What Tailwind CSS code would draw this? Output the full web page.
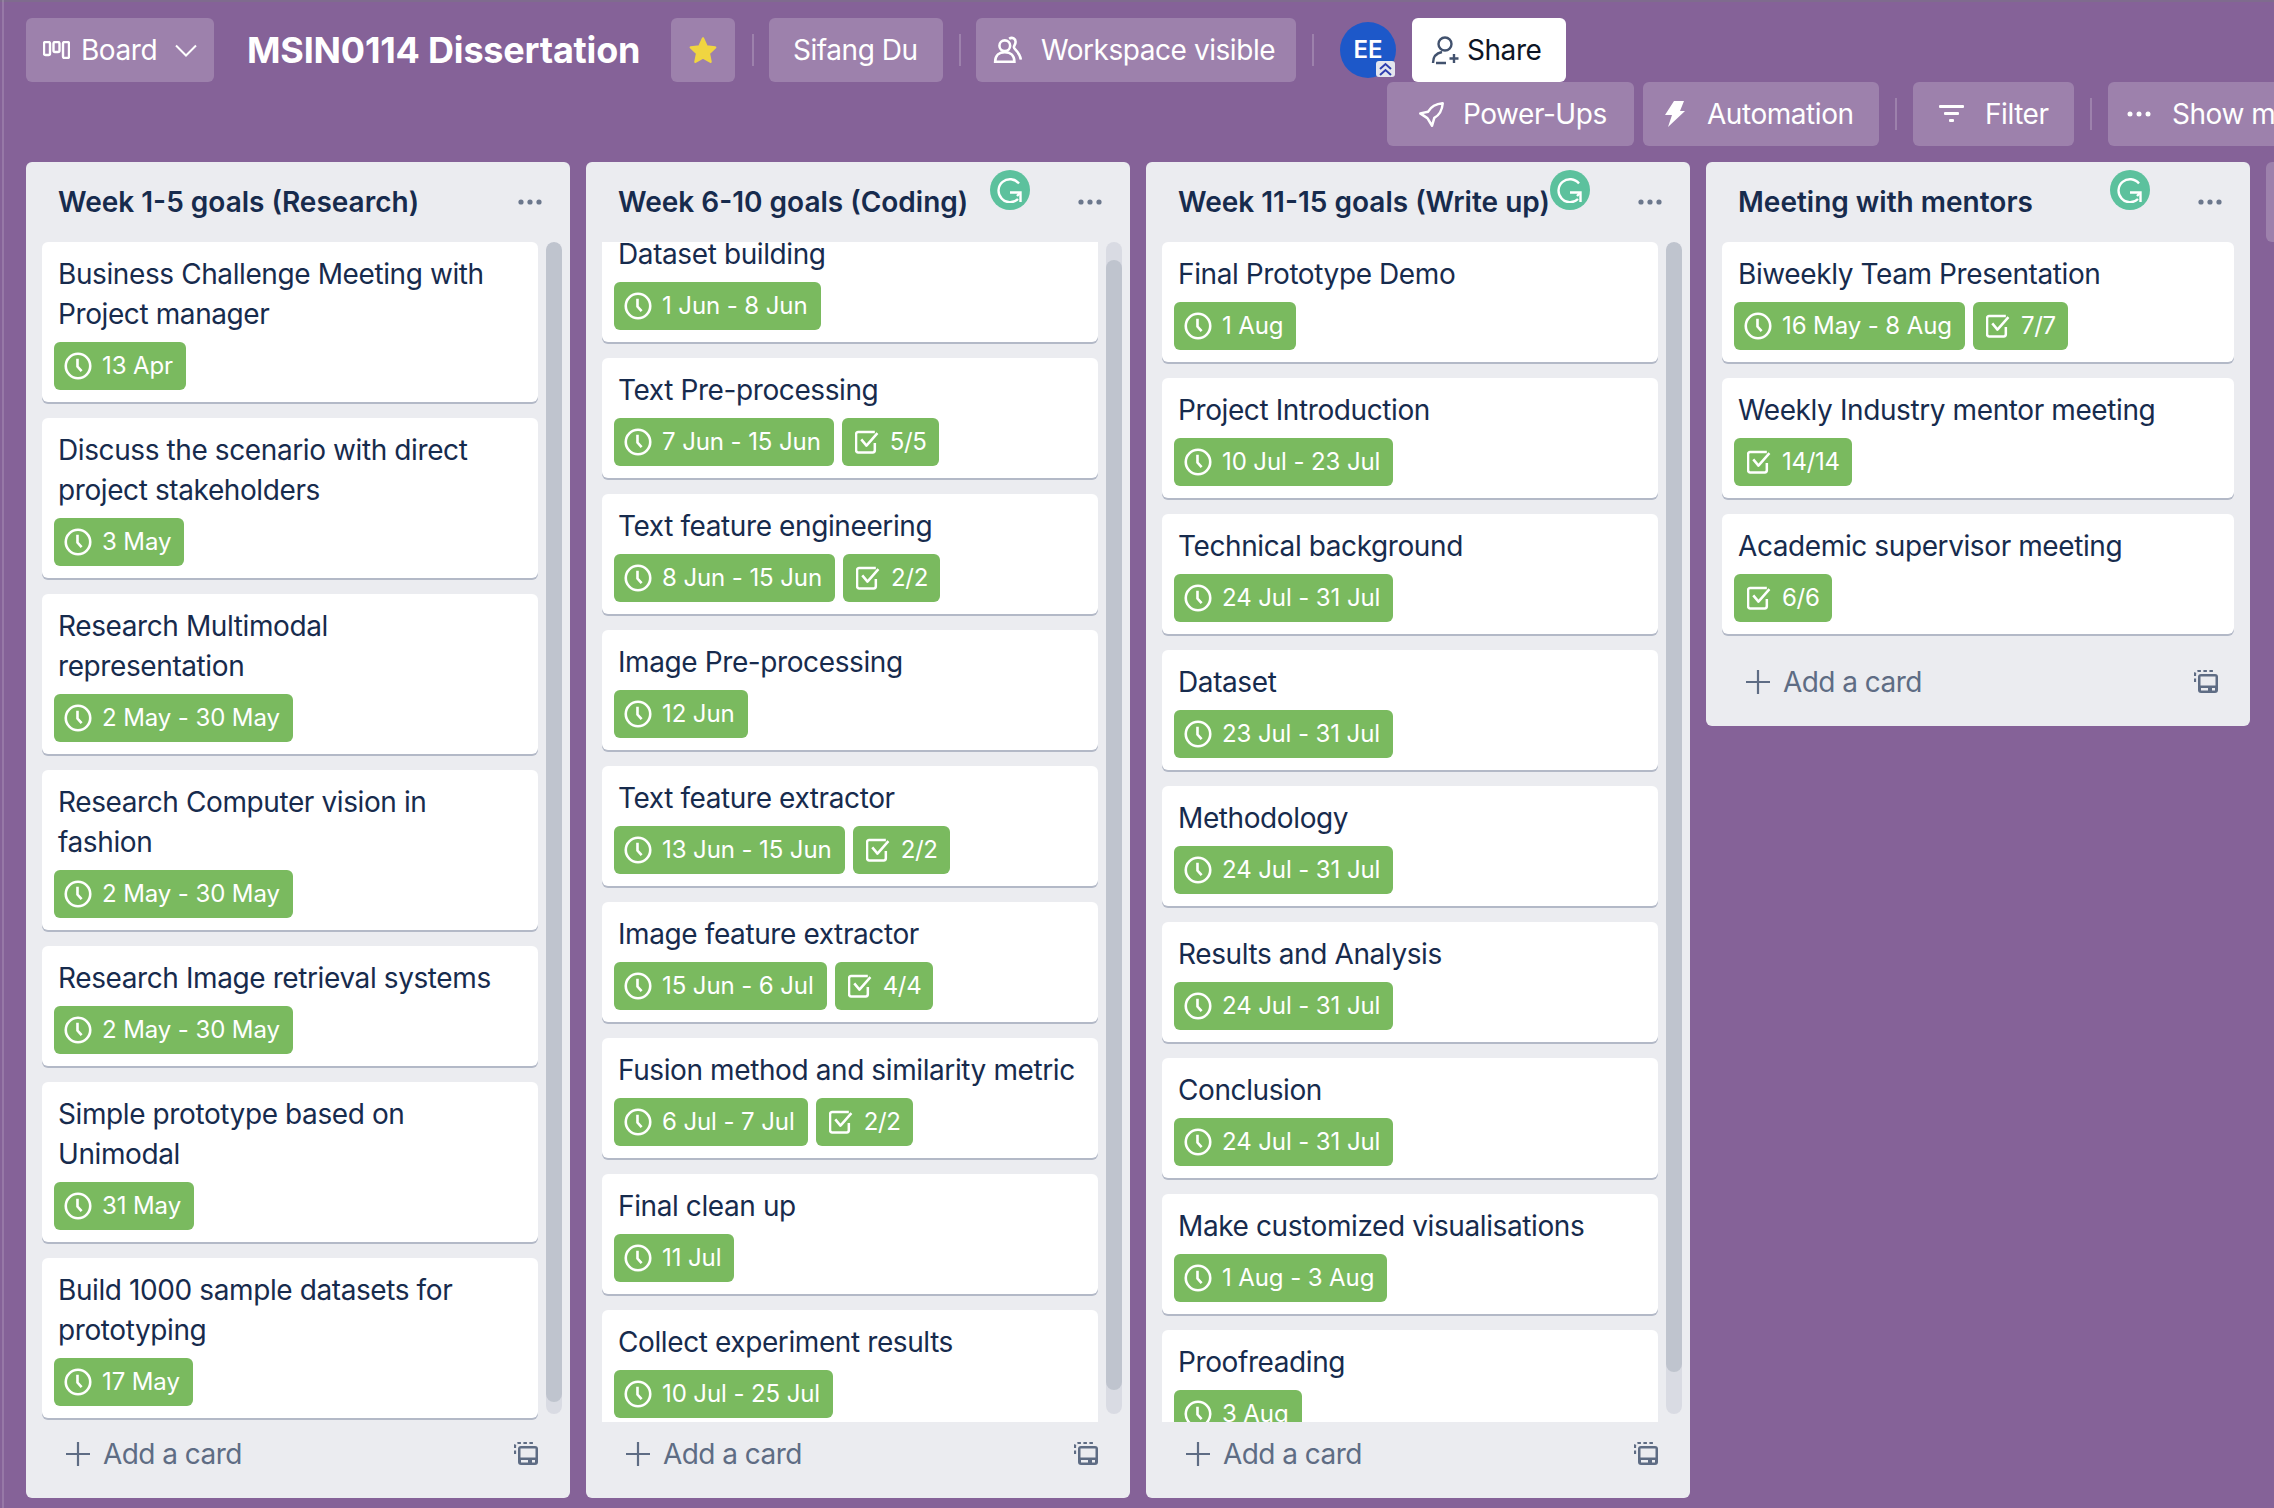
<!DOCTYPE html>
<html lang="en">
<head>
    <meta charset="UTF-8">
    <title>MSIN0114 Dissertation | Trello</title>
    <script src="https://cdn.jsdelivr.net/npm/@tailwindcss/browser@4"></script>
</head>
<body class="relative w-[2274px] h-[1508px] overflow-hidden bg-[#856298] font-['Inter','Liberation_Sans',sans-serif] text-[28px] antialiased">
    <div class="absolute left-[2px] top-0 h-full w-[2px] bg-white/15"></div>

    <header class="h-[146px] border-t-2 border-[#7f6b8e] text-white tracking-[-0.45px]">
        <!-- first row -->
        <div class="flex h-[80px] items-end pl-[26px]">
            <button class="flex h-[64px] w-[188px] shrink-0 items-center rounded-md bg-white/20 pl-[17px]">
                <svg class="w-[27px] h-[18px]" viewBox="0 0 27 18" fill="none" stroke="white" stroke-width="2.400"><rect x="1" y="1" width="6" height="13" rx="1.500"/><rect x="10.500" y="1" width="6" height="10" rx="1.500"/><rect x="20" y="1" width="6" height="16" rx="1.500"/></svg>
                <span class="ml-[11px]">Board</span>
                <svg class="ml-[18px] w-[22px] h-[13px]" viewBox="0 0 22 13" fill="none" stroke="white" stroke-width="2"><path d="M1 1.500l10 10 10-10"/></svg>
            </button>
            <h1 class="ml-[33px] flex h-[64px] w-[391px] shrink-0 items-center whitespace-nowrap text-[36px] font-bold tracking-[-0.2px]">MSIN0114 Dissertation</h1>
            <button class="ml-[33px] flex h-[64px] w-[64px] shrink-0 items-center justify-center rounded-md bg-white/20">
                <svg class="w-[30px] h-[28px]" viewBox="0 0 24 23" fill="#f0d541" stroke="#f0d541" stroke-width="2" stroke-linejoin="round"><path d="M12 2l3 6.600 7 .8-5.200 4.800 1.400 7L12 17.600 5.800 21.200l1.400-7L2 9.400l7-.8z"/></svg>
            </button>
            <div class="ml-[17px] mb-[16px] h-[32px] w-[2px] shrink-0 bg-white/20"></div>
            <button class="ml-[15px] flex h-[64px] w-[174px] shrink-0 items-center rounded-md bg-white/20 pl-[24px]">Sifang Du</button>
            <div class="ml-[16px] mb-[16px] h-[32px] w-[2px] shrink-0 bg-white/20"></div>
            <button class="ml-[15px] flex h-[64px] w-[320px] shrink-0 items-center rounded-md bg-white/20 pl-[17px]">
                <svg class="w-[30px] h-[30px]" viewBox="0 0 28 28" fill="none" stroke="white" stroke-width="2.400"><circle cx="11" cy="10" r="5"/><path d="M2 25c0-6 4-9 9-9s9 3 9 9z"/><path d="M15 3.500c3-2 6.500 0 6 3.500-.2 2-1.500 3-1.500 4.500 0 2 5.500 4 6.500 11.500"/></svg>
                <span class="ml-[18px] whitespace-nowrap">Workspace visible</span>
            </button>
            <div class="ml-[16px] mb-[16px] h-[32px] w-[2px] shrink-0 bg-white/20"></div>
            <div class="relative ml-[26px] mb-[4px] flex h-[56px] w-[56px] shrink-0 items-center justify-center rounded-full bg-[#1d58c9] text-[24px] font-semibold tracking-normal">
                EE
                <span class="absolute left-[36px] top-[39px] flex h-[16px] w-[19px] items-center justify-center rounded-[3px] bg-[#e4e6ee]">
                    <svg class="w-[13px] h-[14px]" viewBox="0 0 13 14" fill="none" stroke="#2f3fb0" stroke-width="2"><path d="M1 7l5.500-5 5.500 5M1 13l5.500-5 5.500 5"/></svg>
                </span>
            </div>
            <button class="ml-[16px] flex h-[64px] w-[154px] shrink-0 items-center rounded-md bg-white pl-[19px] text-[#0d1525]">
                <svg class="w-[30px] h-[30px]" viewBox="0 0 30 30" fill="none" stroke="#42526e" stroke-width="2.400"><circle cx="14" cy="9" r="6.500"/><path d="M2 28c0-7 4-10 9-11M5 28h10M23 19v9M18.500 23.500h9"/></svg>
                <span class="ml-[6px]">Share</span>
            </button>
        </div>
        <!-- second row -->
        <div class="flex h-[64px] items-center pl-[1387px]">
            <button class="flex h-[64px] w-[247px] shrink-0 items-center rounded-md bg-white/20 pl-[31px]">
                <svg class="w-[27px] h-[27px]" viewBox="0 0 24 24" fill="none" stroke="white" stroke-width="2.200" stroke-linejoin="round"><path d="M22 2c-6 .5-10.500 3-13 7.500L2 11l6 4 .5.500 4 6.500 2-7C19 12.500 21.500 8 22 2z"/></svg>
                <span class="ml-[18px]">Power-Ups</span>
            </button>
            <button class="ml-[9px] flex h-[64px] w-[236px] shrink-0 items-center rounded-md bg-white/20 pl-[22px]">
                <svg class="w-[20px] h-[26px]" viewBox="0 0 20 26" fill="white"><path d="M9 0h10l-4 10h5L3 26l4-12H0z"/></svg>
                <span class="ml-[22px]">Automation</span>
            </button>
            <div class="ml-[16px] h-[32px] w-[2px] shrink-0 bg-white/20"></div>
            <button class="ml-[16px] flex h-[64px] w-[161px] shrink-0 items-center rounded-md bg-white/20 pl-[26px]">
                <svg class="w-[25px] h-[18px]" viewBox="0 0 25 18" fill="white"><rect width="25" height="3" rx="1"/><rect x="5" y="7" width="15" height="3" rx="1"/><rect x="10" y="14" width="5" height="3" rx="1"/></svg>
                <span class="ml-[21px]">Filter</span>
            </button>
            <div class="ml-[16px] h-[32px] w-[2px] shrink-0 bg-white/20"></div>
            <button class="ml-[16px] flex h-[64px] w-[230px] shrink-0 items-center rounded-md bg-white/20 pl-[19px]">
                <svg class="w-[24px] h-[6px]" viewBox="0 0 24 6" fill="white"><circle cx="3" cy="3" r="2.500"/><circle cx="12" cy="3" r="2.500"/><circle cx="21" cy="3" r="2.500"/></svg>
                <span class="ml-[21px] whitespace-nowrap">Show menu</span>
            </button>
        </div>
    </header>

    <main id="board" class="mt-[16px] flex items-start gap-4 pl-[26px]"></main>

    <script>
        const clockIcon = `<svg class="w-[28px] h-[28px] shrink-0" viewBox="0 0 27 27" fill="none" stroke="white" stroke-width="2.500"><circle cx="13.500" cy="13.500" r="11.800"/><path d="M13 6.500v7.500l4 4.500"/></svg>`;
        const checkIcon = `<svg class="w-[24px] h-[24px] shrink-0" viewBox="0 0 23 23" fill="none" stroke="white" stroke-width="2.400" stroke-linejoin="round"><path d="M19 12.500v7a2 2 0 0 1-2 2H3a2 2 0 0 1-2-2V4a2 2 0 0 1 2-2h16"/><path d="M6 9l5 6L21.500 3"/></svg>`;
        const plusIcon = `<svg class="w-[24px] h-[24px] shrink-0" viewBox="0 0 24 24" stroke="#5e6c84" stroke-width="2.200"><path d="M12 0v24M0 12h24"/></svg>`;
        const templateIcon = `<svg class="mb-[2px] w-[24px] h-[23px]" viewBox="0 0 24 23" fill="none"><path d="M1 12V4a3 3 0 0 1 3-3h15" stroke="#5e6c84" stroke-width="2.200" stroke-dasharray="3.500 2.500"/><rect x="4" y="4" width="20" height="19" rx="3" fill="#5e6c84"/><rect x="6.500" y="6.500" width="15" height="9" fill="#ebecf0"/><rect x="7" y="18" width="7" height="2.500" fill="#ebecf0"/><rect x="18" y="18" width="3" height="2.500" fill="#ebecf0"/></svg>`;
        const grammarlyIcon = `<svg class="w-[26px] h-[26px]" viewBox="0 0 26 26" fill="none" stroke="white" stroke-width="2.400"><path d="M22 6.500A11.500 11.500 0 1 0 21 22"/><path d="M13 15.500h10.500V25"/><path d="M23 16l-3 3"/></svg>`;

        const boardLists = [
            {
                title: 'Week 1-5 goals (Research)', track: 1172, thumbTop: 0, thumb: 1160, scroll: 0, grammarly: false,
                cards: [
                    ['Business Challenge Meeting with Project manager', '13 Apr'],
                    ['Discuss the scenario with direct project stakeholders', '3 May'],
                    ['Research Multimodal representation', '2 May - 30 May'],
                    ['Research Computer vision in fashion', '2 May - 30 May'],
                    ['Research Image retrieval systems', '2 May - 30 May'],
                    ['Simple prototype based on Unimodal', '31 May'],
                    ['Build 1000 sample datasets for prototyping', '17 May'],
                ],
            },
            {
                title: 'Week 6-10 goals (Coding)', track: 1172, thumbTop: 18, thumb: 1130, scroll: 20, grammarly: true,
                cards: [
                    ['Dataset building', '1 Jun - 8 Jun'],
                    ['Text Pre-processing', '7 Jun - 15 Jun', '5/5'],
                    ['Text feature engineering', '8 Jun - 15 Jun', '2/2'],
                    ['Image Pre-processing', '12 Jun'],
                    ['Text feature extractor', '13 Jun - 15 Jun', '2/2'],
                    ['Image feature extractor', '15 Jun - 6 Jul', '4/4'],
                    ['Fusion method and similarity metric', '6 Jul - 7 Jul', '2/2'],
                    ['Final clean up', '11 Jul'],
                    ['Collect experiment results', '10 Jul - 25 Jul'],
                ],
            },
            {
                title: 'Week 11-15 goals (Write up)', track: 1172, thumbTop: 0, thumb: 1130, scroll: 0, grammarly: true,
                cards: [
                    ['Final Prototype Demo', '1 Aug'],
                    ['Project Introduction', '10 Jul - 23 Jul'],
                    ['Technical background', '24 Jul - 31 Jul'],
                    ['Dataset', '23 Jul - 31 Jul'],
                    ['Methodology', '24 Jul - 31 Jul'],
                    ['Results and Analysis', '24 Jul - 31 Jul'],
                    ['Conclusion', '24 Jul - 31 Jul'],
                    ['Make customized visualisations', '1 Aug - 3 Aug'],
                    ['Proofreading', '3 Aug'],
                ],
            },
            {
                title: 'Meeting with mentors', grammarly: true,
                cards: [
                    ['Biweekly Team Presentation', '16 May - 8 Aug', '7/7'],
                    ['Weekly Industry mentor meeting', null, '14/14'],
                    ['Academic supervisor meeting', null, '6/6'],
                ],
            },
        ];

        function createBadges(date, checklist) {
            let html = '';
            if (date) {
                html += `<span class="flex h-[48px] items-center gap-[10px] rounded-md bg-[#7aba5f] pl-[10px] pr-[13px] text-[24px] tracking-[-0.1px] text-white whitespace-nowrap">${clockIcon}${date}</span>`;
            }
            if (checklist) {
                html += `<span class="flex h-[48px] items-center gap-[11px] rounded-md bg-[#7aba5f] pl-[13px] pr-[12px] text-[24px] tracking-[-0.3px] text-white whitespace-nowrap">${checkIcon}${checklist}</span>`;
            }
            return html;
        }

        function createCard([text, date, checklist]) {
            return `
                <article class="mb-[16px] rounded-md bg-white pt-[12px] pb-[12px] shadow-[0_2px_0_#b3b9c7]">
                    <p class="pl-[16px] pr-[19px] leading-[40px] tracking-[-0.4px] text-[#172b4d]">${text}</p>
                    <div class="mt-[8px] flex gap-[8px] pl-[12px]">${createBadges(date, checklist)}</div>
                </article>`;
        }

        function createList(list) {
            const cards = list.cards.map(createCard).join('');
            const body = list.track
                ? `<div class="flex h-[1180px] gap-[8px] pl-[16px] pr-[8px]">
                        <div class="h-full w-[496px] overflow-hidden"><div style="margin-top:-${list.scroll}px">${cards}</div></div>
                        <div class="w-[16px] overflow-hidden rounded-lg bg-[#d9dbe3]" style="height:${list.track}px">
                            <div class="rounded-lg bg-[#bfc4ce]" style="margin-top:${list.thumbTop}px;height:${list.thumb}px"></div>
                        </div>
                    </div>`
                : `<div class="px-[16px]">${cards}</div>`;

            return `
                <section class="relative w-[544px] shrink-0 rounded-md bg-[#ebecf0] pb-[12px]">
                    <div class="flex h-[80px] items-center justify-between pl-[32px] pr-[28px]">
                        <h2 class="font-semibold whitespace-nowrap text-[#172b4d]">${list.title}</h2>
                        <svg class="w-[24px] h-[6px]" viewBox="0 0 24 6" fill="#6b778c"><circle cx="3" cy="3" r="2.600"/><circle cx="12" cy="3" r="2.600"/><circle cx="21" cy="3" r="2.600"/></svg>
                    </div>
                    ${list.grammarly ? `<span class="absolute right-[100px] top-[8px] flex h-[40px] w-[40px] items-center justify-center rounded-full bg-[#5cc19d]">${grammarlyIcon}</span>` : ''}
                    ${body}
                    <div class="flex h-[64px] items-center justify-between pl-[40px] pr-[32px] tracking-[-0.55px] text-[#5e6c84]">
                        <span class="flex items-center gap-[13px]">${plusIcon}Add a card</span>
                        ${templateIcon}
                    </div>
                </section>`;
        }

        document.getElementById('board').innerHTML =
            boardLists.map(createList).join('') +
            `<div class="h-[80px] w-[544px] shrink-0 rounded-md bg-white/20"></div>`;
    </script>
</body>
</html>
